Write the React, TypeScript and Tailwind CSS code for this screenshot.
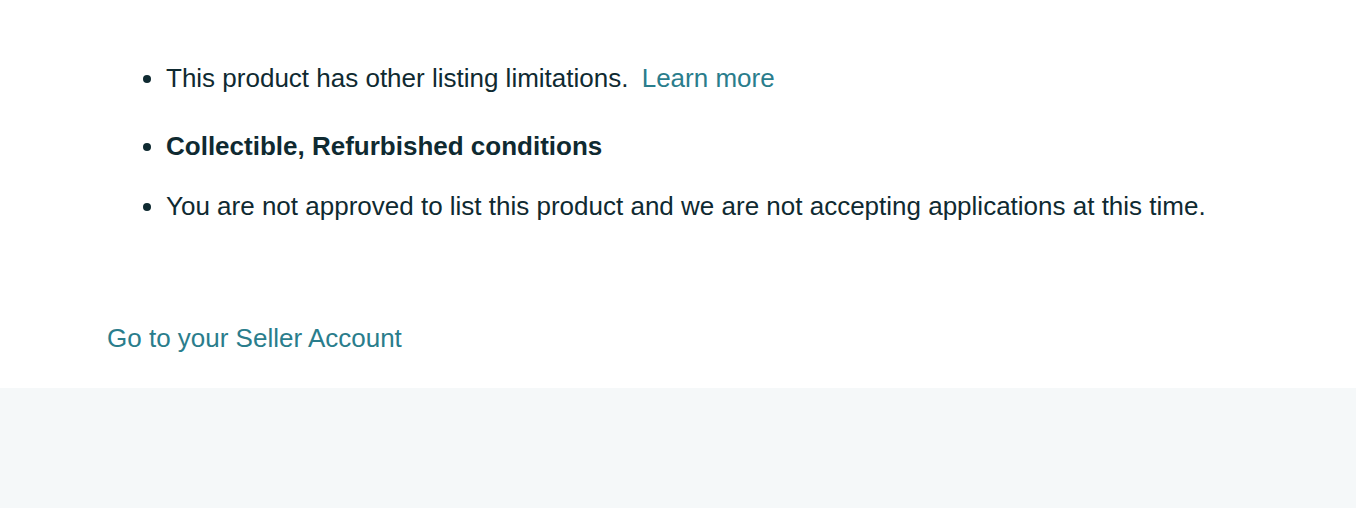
export default function App() {
  return (
    <main
      className="min-h-[508px] bg-white text-[#0f2a31]"
      style={{ fontFamily: '"Liberation Sans", Arial, sans-serif' }}
    >
      <section className="h-[388px] pl-[107px] pt-[60px]">
        <ul className="list-disc pl-[59px] text-[26px] leading-[36px]">
          <li>
            This product has other listing limitations.{" "}
            <a href="#" className="ml-[6px] text-[#2a7d8c]">
              Learn more
            </a>
          </li>
          <li className="mt-[32px] font-bold">Collectible, Refurbished conditions</li>
          <li className="mt-[24px]">
            You are not approved to list this product and we are not accepting applications at this time.
          </li>
        </ul>
        <a href="#" className="mt-[96px] block text-[26px] leading-[36px] text-[#2a7d8c]">
          Go to your Seller Account
        </a>
      </section>
      <div className="h-[120px] bg-[#f5f8f9]" />
    </main>
  );
}
